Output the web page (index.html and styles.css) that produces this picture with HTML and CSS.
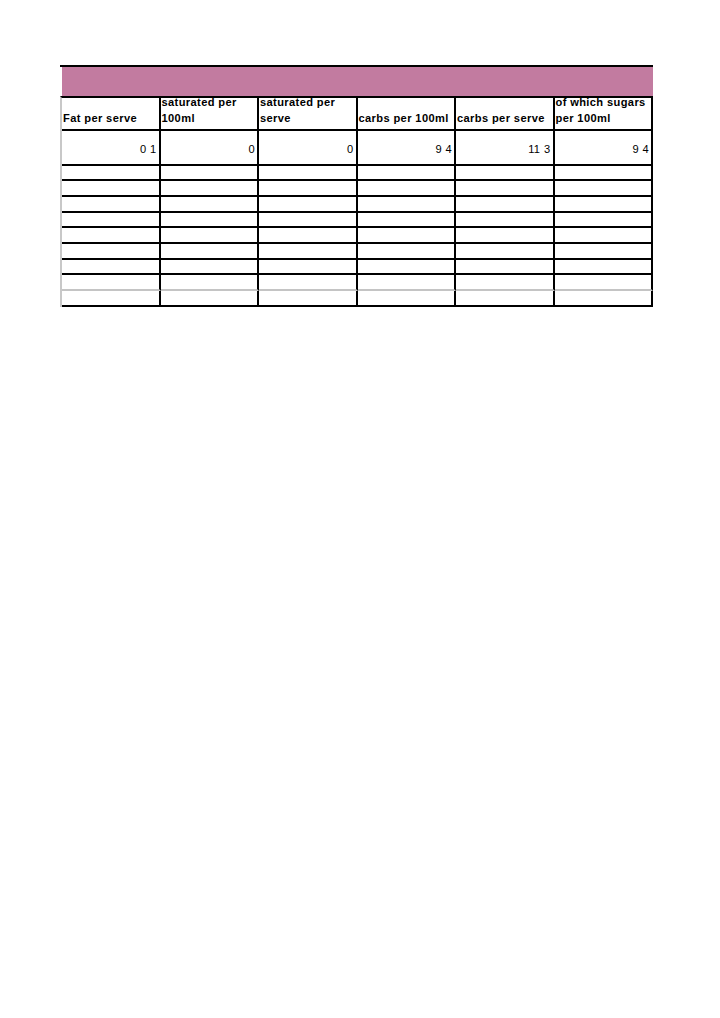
FILE: index.html
```html
<!DOCTYPE html>
<html>
<head>
<meta charset="utf-8">
<link rel="stylesheet" href="styles.css">
</head>
<body>
<div class="sheet">
  <div class="band"></div>
  <div class="grid">
    <div class="cell head"><span>Fat per serve</span></div>
    <div class="cell head"><span>saturated per 100ml</span></div>
    <div class="cell head"><span>saturated per serve</span></div>
    <div class="cell head"><span>carbs per 100ml</span></div>
    <div class="cell head"><span>carbs per serve</span></div>
    <div class="cell head"><span>of which sugars per 100ml</span></div>

    <div class="cell num">0 1</div>
    <div class="cell num">0</div>
    <div class="cell num">0</div>
    <div class="cell num">9 4</div>
    <div class="cell num">11 3</div>
    <div class="cell num">9 4</div>

    <div class="cell"></div><div class="cell"></div><div class="cell"></div><div class="cell"></div><div class="cell"></div><div class="cell"></div>
    <div class="cell"></div><div class="cell"></div><div class="cell"></div><div class="cell"></div><div class="cell"></div><div class="cell"></div>
    <div class="cell"></div><div class="cell"></div><div class="cell"></div><div class="cell"></div><div class="cell"></div><div class="cell"></div>
    <div class="cell"></div><div class="cell"></div><div class="cell"></div><div class="cell"></div><div class="cell"></div><div class="cell"></div>
    <div class="cell"></div><div class="cell"></div><div class="cell"></div><div class="cell"></div><div class="cell"></div><div class="cell"></div>
    <div class="cell"></div><div class="cell"></div><div class="cell"></div><div class="cell"></div><div class="cell"></div><div class="cell"></div>
    <div class="cell"></div><div class="cell"></div><div class="cell"></div><div class="cell"></div><div class="cell"></div><div class="cell"></div>
    <div class="cell gray"></div><div class="cell gray"></div><div class="cell gray"></div><div class="cell gray"></div><div class="cell gray"></div><div class="cell gray"></div>
    <div class="cell"></div><div class="cell"></div><div class="cell"></div><div class="cell"></div><div class="cell"></div><div class="cell"></div>
  </div>
</div>
</body>
</html>
```

FILE: styles.css
```css
html, body {
  margin: 0;
  padding: 0;
  background: #ffffff;
}

body {
  font-family: "Liberation Sans", Arial, sans-serif;
  color: #000000;
}

.sheet {
  margin: 65px 0 0 60px;
  width: 593px;
  border-top: 2px solid #000000;
}

.band {
  margin-left: 2px;
  height: 29px;
  background: #c27ba0;
}

.grid {
  display: grid;
  grid-template-columns: repeat(6, 98.5px);
  grid-template-rows: 33.3px 34.4px repeat(9, 15.67px);
  border-top: 2px solid #000000;
  border-left: 2px solid #c8c8c8;
}

.cell {
  box-sizing: border-box;
  border-right: 2px solid #000000;
  border-bottom: 2px solid #000000;
  min-width: 0;
}

.cell.gray {
  border-bottom-color: #c4c4c4;
}

.head {
  display: flex;
  flex-direction: column;
  justify-content: flex-end;
  padding: 0 1px 3.4px 1px;
  font-weight: bold;
  font-size: 11.1px;
  letter-spacing: 0.38px;
  line-height: 16px;
}

.num {
  display: flex;
  align-items: flex-end;
  justify-content: flex-end;
  padding: 0 2px 8px 0;
  font-size: 11.1px;
  letter-spacing: 0.4px;
  line-height: 13px;
  white-space: pre;
}
```
